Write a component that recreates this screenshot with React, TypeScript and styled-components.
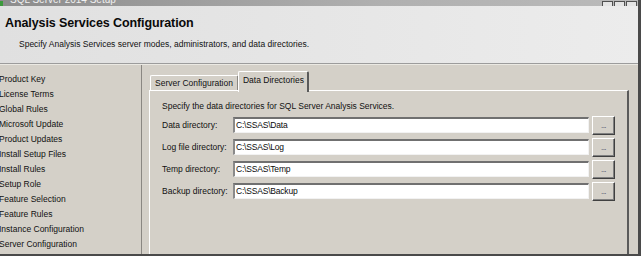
import React from "react";
import styled, { createGlobalStyle } from "styled-components";

const Global = createGlobalStyle`
  html, body { margin: 0; padding: 0; background: #ffffff; overflow: hidden; }
  body { font-family: "Liberation Sans", Arial, sans-serif; }
`;

const Window = styled.div`
  box-sizing: border-box;
  width: 641px;
  height: 256px;
  display: flex;
  flex-direction: column;
  border-right: 3px solid #4a4a4a;
  border-bottom: 2px solid #4a4a4a;
  overflow: hidden;
`;

const TitleBar = styled.div`
  height: 6px;
  flex: none;
  display: flex;
  align-items: flex-end;
  background: linear-gradient(to right, #8c8c8c, #b0b0b0 60%, #bababa);
  overflow: hidden;
`;

const TitleIcon = styled.div`
  width: 3px;
  height: 5px;
  background: #3c9a3c;
  margin-right: 7px;
  flex: none;
`;

const TitleText = styled.div`
  font-size: 10px;
  line-height: 10px;
  color: #f0f0f0;
  margin-bottom: 1px;
  white-space: nowrap;
`;

const WinButtons = styled.div`
  margin-left: auto;
  margin-right: 1px;
  display: flex;
  gap: 1px;
  height: 5px;
`;

const WinBtn = styled.div`
  box-sizing: border-box;
  width: 11px;
  height: 5px;
  background: #e4e4e4;
  border: 1px solid #505050;
  border-bottom: none;
`;

const Header = styled.div`
  height: 57px;
  flex: none;
  background: linear-gradient(to right, #e0e0e0, #e6e6e6 50%, #ececec);
  border-bottom: 1px solid #9c9c9c;
  padding-left: 5px;
  display: flex;
  flex-direction: column;
`;

const HeaderTitle = styled.h1`
  margin: 0;
  padding-top: 9px;
  font-size: 12.5px;
  line-height: 16px;
  letter-spacing: -0.1px;
  font-weight: bold;
  color: #0a0a0a;
  white-space: nowrap;
`;

const HeaderSub = styled.div`
  margin-top: 7px;
  padding-left: 14px;
  font-size: 8.5px;
  line-height: 12px;
  color: #111;
  white-space: nowrap;
`;

const Body = styled.div`
  flex: 1;
  display: flex;
  background: #d4d0c8;
  border-top: 1px solid #ebe9e3;
  min-height: 0;
`;

const Nav = styled.div`
  width: 141px;
  flex: none;
  border-right: 1px solid #8a8782;
  padding-top: 7px;
  display: flex;
  flex-direction: column;
  overflow: hidden;
`;

const NavItem = styled.div`
  font-size: 8.5px;
  line-height: 15px;
  color: #111;
  white-space: nowrap;
  margin-left: -1px;
`;

const Content = styled.div`
  flex: 1;
  padding: 8px 9px 0 7px;
  display: flex;
  flex-direction: column;
  min-width: 0;
`;

const TabRow = styled.div`
  display: flex;
  align-items: flex-end;
  padding-left: 1px;
  height: 17px;
  position: relative;
  z-index: 1;
`;

const Tab = styled.div<{ $active?: boolean }>`
  font-size: 8.5px;
  color: #111;
  white-space: nowrap;
  background: #d4d0c8;
  border-top: 1px solid #ffffff;
  border-left: 1px solid #ffffff;
  border-right: 2px solid ${(p) => (p.$active ? "#5a5a5a" : "#8a8782")};
  border-top-left-radius: 2px;
  border-top-right-radius: 2px;
  padding: ${(p) => (p.$active ? "2px 3px 5px 4px" : "1px 4px 0 4px")};
  line-height: 13px;
  margin-bottom: ${(p) => (p.$active ? "-2px" : "0")};
  margin-left: ${(p) => (p.$active ? "-1px" : "0")};
`;

const Panel = styled.div`
  flex: 1;
  background: #d4d0c8;
  border-top: 1px solid #ffffff;
  border-left: 1px solid #ffffff;
  border-right: 2px solid #5a5a5a;
  padding: 8px 0 0 12px;
  display: flex;
  flex-direction: column;
`;

const PanelText = styled.div`
  font-size: 8.5px;
  line-height: 14px;
  color: #111;
  margin-bottom: 1px;
  white-space: nowrap;
`;

const Row = styled.div`
  display: flex;
  align-items: center;
  height: 22px;
`;

const Label = styled.div`
  width: 71px;
  flex: none;
  font-size: 8.5px;
  color: #111;
  white-space: nowrap;
`;

const TextBox = styled.div`
  width: 352px;
  height: 13px;
  background: #ffffff;
  border-top: 2px solid #707070;
  border-left: 2px solid #8a8a8a;
  border-right: 1px solid #f2f2f2;
  border-bottom: 1px solid #f2f2f2;
  font-size: 8.5px;
  line-height: 13px;
  padding-left: 1px;
  color: #0a0a0a;
  letter-spacing: -0.2px;
`;

const BrowseButton = styled.div`
  box-sizing: border-box;
  margin-left: 3px;
  width: 23px;
  height: 19px;
  background: #d4d0c8;
  border-top: 1px solid #ffffff;
  border-left: 1px solid #ffffff;
  border-right: 1px solid #404040;
  border-bottom: 1px solid #404040;
  box-shadow: inset -1px -1px 0 #808080;
  display: flex;
  align-items: center;
  justify-content: center;
  padding-top: 2px;
  font-size: 8px;
  line-height: 8px;
  color: #3a3a5a;
  letter-spacing: -0.5px;
`;

const navItems = [
  "Product Key",
  "License Terms",
  "Global Rules",
  "Microsoft Update",
  "Product Updates",
  "Install Setup Files",
  "Install Rules",
  "Setup Role",
  "Feature Selection",
  "Feature Rules",
  "Instance Configuration",
  "Server Configuration",
];

const dirs = [
  { label: "Data directory:", value: "C:\\SSAS\\Data" },
  { label: "Log file directory:", value: "C:\\SSAS\\Log" },
  { label: "Temp directory:", value: "C:\\SSAS\\Temp" },
  { label: "Backup directory:", value: "C:\\SSAS\\Backup" },
];

export default function App() {
  return (
    <>
      <Global />
      <Window>
        <TitleBar>
          <TitleIcon />
          <TitleText>SQL Server 2014 Setup</TitleText>
          <WinButtons>
            <WinBtn />
            <WinBtn />
            <WinBtn />
          </WinButtons>
        </TitleBar>
        <Header>
          <HeaderTitle>Analysis Services Configuration</HeaderTitle>
          <HeaderSub>
            Specify Analysis Services server modes, administrators, and data directories.
          </HeaderSub>
        </Header>
        <Body>
          <Nav>
            {navItems.map((n) => (
              <NavItem key={n}>{n}</NavItem>
            ))}
          </Nav>
          <Content>
            <TabRow>
              <Tab>Server Configuration</Tab>
              <Tab $active>Data Directories</Tab>
            </TabRow>
            <Panel>
              <PanelText>Specify the data directories for SQL Server Analysis Services.</PanelText>
              {dirs.map((d) => (
                <Row key={d.label}>
                  <Label>{d.label}</Label>
                  <TextBox>{d.value}</TextBox>
                  <BrowseButton>...</BrowseButton>
                </Row>
              ))}
            </Panel>
          </Content>
        </Body>
      </Window>
    </>
  );
}
